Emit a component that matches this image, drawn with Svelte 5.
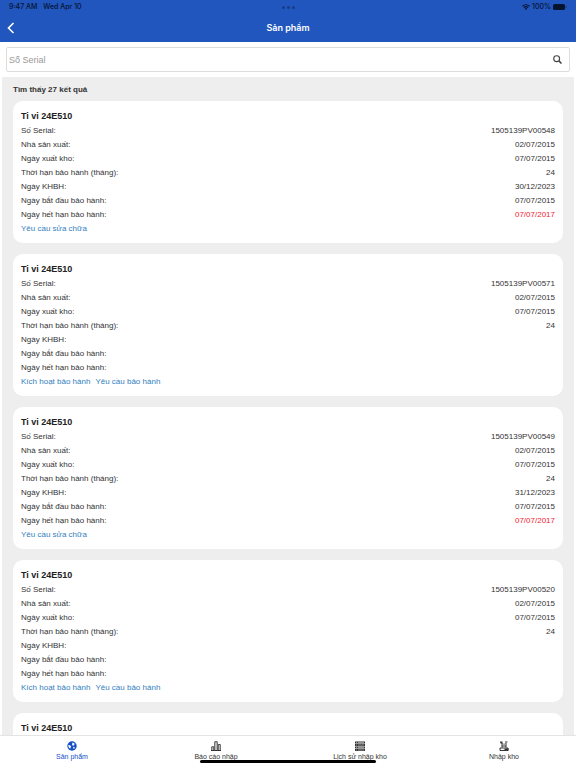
<script lang="ts">
	type Product = {
		name: string;
		serial: string;
		activated: string;
		start: string;
		end: string;
	};

	let query = $state('');
	let activeTab = $state('product');

	const products: Product[] = [
		{ name: 'Ti vi 24E510', serial: '1505139PV00548', activated: '30/12/2023', start: '07/07/2015', end: '07/07/2017' },
		{ name: 'Ti vi 24E510', serial: '1505139PV00571', activated: '', start: '', end: '' },
		{ name: 'Ti vi 24E510', serial: '1505139PV00549', activated: '31/12/2023', start: '07/07/2015', end: '07/07/2017' },
		{ name: 'Ti vi 24E510', serial: '1505139PV00520', activated: '', start: '', end: '' },
		{ name: 'Ti vi 24E510', serial: '', activated: '', start: '', end: '' }
	];

	const tabs = [
		{ id: 'product', label: 'Sản phẩm' },
		{ id: 'report', label: 'Báo cáo nhập' },
		{ id: 'history', label: 'Lịch sử nhập kho' },
		{ id: 'import', label: 'Nhập kho' }
	];
</script>

<div class="screen">
	<header class="header">
		<div class="status">
			<div class="status-left">
				<span>9:47 AM</span>
				<span>Wed Apr 10</span>
			</div>
			<div class="dots"><i></i><i></i><i></i></div>
			<div class="status-right">
				<svg width="8" height="6" viewBox="0 0 16 12" aria-hidden="true">
					<path d="M1 4.5a10 10 0 0 1 14 0M3.7 7.2a6.2 6.2 0 0 1 8.6 0" fill="none" stroke="currentColor" stroke-width="2.2" />
					<path d="M8 12 5.4 9.3a3.8 3.8 0 0 1 5.2 0z" fill="currentColor" />
				</svg>
				<span>100%</span>
				<svg width="14" height="6" viewBox="0 0 28 12" aria-hidden="true">
					<rect x="0" y="0" width="24" height="12" rx="3" fill="currentColor" />
					<path d="M25.5 4a2.4 2.4 0 0 1 0 4z" fill="currentColor" />
				</svg>
			</div>
		</div>
		<div class="nav">
			<button class="back" aria-label="Quay lại">
				<svg width="8" height="12" viewBox="0 0 8 12" aria-hidden="true">
					<path d="M6.5 1 1.5 6l5 5" fill="none" stroke="currentColor" stroke-width="1.6" />
				</svg>
			</button>
			<h1>Sản phẩm</h1>
		</div>
	</header>

	<form class="search" onsubmit={(e) => e.preventDefault()}>
		<input type="text" aria-label="Số Serial" placeholder="Số Serial" bind:value={query} />
		<button type="submit" aria-label="Tìm kiếm">
			<svg width="9" height="9" viewBox="0 0 16 16" aria-hidden="true">
				<circle cx="6.5" cy="6.5" r="5.2" fill="none" stroke="currentColor" stroke-width="2" />
				<path d="m10.5 10.5 4.6 4.6" stroke="currentColor" stroke-width="2.8" />
			</svg>
		</button>
	</form>

	<main class="results">
		<p class="count">Tìm thấy 27 kết quả</p>

		{#each products as p}
			<article class="card">
				<h2>{p.name}</h2>
				<dl>
					<div><dt>Số Serial:</dt><dd>{p.serial}</dd></div>
					<div><dt>Nhà sản xuất:</dt><dd>02/07/2015</dd></div>
					<div><dt>Ngày xuất kho:</dt><dd>07/07/2015</dd></div>
					<div><dt>Thời hạn bảo hành (tháng):</dt><dd>24</dd></div>
					<div><dt>Ngày KHBH:</dt><dd>{p.activated}</dd></div>
					<div><dt>Ngày bắt đầu bảo hành:</dt><dd>{p.start}</dd></div>
					<div><dt>Ngày hết hạn bảo hành:</dt><dd class="expired">{p.end}</dd></div>
				</dl>
				<div class="actions">
					{#if p.activated}
						<a href="#repair">Yêu cầu sửa chữa</a>
					{:else}
						<a href="#activate">Kích hoạt bảo hành</a>
						<a href="#warranty">Yêu cầu bảo hành</a>
					{/if}
				</div>
			</article>
		{/each}
	</main>

	<nav class="tabs">
		{#each tabs as tab}
			<button class:active={activeTab === tab.id} onclick={() => (activeTab = tab.id)}>
				<svg width="10" height="10" viewBox="0 0 20 20" aria-hidden="true">
					{#if tab.id === 'product'}
						<circle cx="10" cy="10" r="9.4" fill="currentColor" />
						<path d="M11 3l4 2-.5 3.5-3 .8-1.500-2.300zM2.500 8l3.500.7 2.500 2.600-1.500 1.800-.4 2.500L3.500 13zM12.500 12l3.500.4-1.600 3.100-2.200-.9z" fill="#fff" />
					{:else if tab.id === 'report'}
						<path d="M1.5 19v-7.500h4V19zM7.500 19V1.500h5V19zM14.500 19V7h4v12z" fill="#ddd" stroke="currentColor" stroke-width="1.800" />
						<path d="M0 19h20" stroke="currentColor" stroke-width="2" />
					{:else if tab.id === 'history'}
						<path d="M0 1h20v4H0zM0 6h20v4H0zM0 11h20v4H0zM0 16h20v4H0z" fill="currentColor" />
						<path d="M6 3h12M6 8h12M6 13h12M6 18h12M2 3h2M2 8h2M2 13h2M2 18h2" stroke="#bbb" stroke-width="1.400" />
					{:else}
						<path d="M2 14h16v5H2z" fill="#fff" stroke="currentColor" stroke-width="2" />
						<path d="M6 13V4M14 13V4M6 10h8M12 2h5M8 5l2 2 2-2" fill="none" stroke="currentColor" stroke-width="2" />
						<path d="M2 1h5v4H3z" fill="currentColor" />
						<path d="M11 17h8" stroke="currentColor" stroke-width="4" />
					{/if}
				</svg>
				<span>{tab.label}</span>
			</button>
		{/each}
		<div class="home-bar"></div>
	</nav>
</div>

<style>
	:global(body) {
		background: #fff;
	}
	.screen {
		display: flex;
		flex-direction: column;
		height: 100vh;
		font-family: 'Liberation Sans', Arial, sans-serif;
		font-size: 8px;
		line-height: 14px;
		color: #333;
	}
	button {
		border: 0;
		padding: 0;
		background: none;
		font: inherit;
		color: inherit;
		cursor: pointer;
	}
	svg {
		display: block;
	}
	.header {
		background: #2156bf;
		font-family: Inter, sans-serif;
	}
	.status {
		display: grid;
		grid-template-columns: 1fr auto 1fr;
		align-items: center;
		height: 14px;
		padding: 0 9px;
		font-size: 7px;
		font-weight: 500;
		color: #071430;
	}
	.status-left {
		display: flex;
		gap: 6px;
	}
	.status-right {
		display: flex;
		align-items: center;
		justify-content: flex-end;
		gap: 2px;
	}
	.dots {
		display: flex;
		gap: 2px;
	}
	.dots i {
		width: 3px;
		height: 3px;
		border-radius: 50%;
		background: #173d87;
	}
	.nav {
		display: grid;
		grid-template-columns: 1fr auto 1fr;
		align-items: center;
		height: 28px;
		padding: 0 7px;
		color: #fff;
	}
	.nav h1 {
		margin: 0;
		font-size: 9px;
		font-weight: 600;
	}
	.search {
		display: flex;
		height: 23px;
		margin: 5px 6px;
		border: 1px solid #ddd;
		border-radius: 2px;
	}
	.search input {
		flex: 1;
		min-width: 0;
		padding: 0 2px;
		border: 0;
		outline: 0;
		background: none;
		font: inherit;
		font-size: 9px;
		color: #333;
	}
	.search input::placeholder {
		color: #999;
	}
	.search button {
		display: flex;
		align-items: center;
		padding: 0 7px;
		color: #444;
	}
	.results {
		flex: 1;
		min-height: 0;
		margin: 0 2px;
		padding: 6px 11px 0;
		background: #eee;
		overflow-y: auto;
		scrollbar-width: none;
	}
	.count {
		margin: 0 0 4px;
		font-weight: 700;
	}
	.card {
		margin-bottom: 11px;
		padding: 8px 8px 7px;
		border-radius: 10px;
		background: #fff;
	}
	.card h2 {
		margin: 0;
		font-size: 9px;
		line-height: 15px;
		font-weight: 700;
		color: #222;
	}
	.card dl {
		margin: 0;
	}
	.card dl div {
		display: flex;
		justify-content: space-between;
	}
	.card dd {
		margin: 0;
	}
	.card .expired {
		color: #f5222d;
	}
	.actions {
		display: flex;
		gap: 5px;
	}
	.actions a {
		color: #3480c0;
		text-decoration: none;
	}
	.tabs {
		position: relative;
		display: grid;
		grid-template-columns: repeat(4, 1fr);
		height: 32px;
		border-top: 1px solid #e4e4e4;
		background: #fff;
	}
	.tabs button {
		display: flex;
		flex-direction: column;
		align-items: center;
		padding-top: 5px;
		font-size: 7px;
		line-height: 12px;
	}
	.tabs .active {
		color: #1450c8;
	}
	.home-bar {
		position: absolute;
		left: 50%;
		bottom: 5px;
		width: 176px;
		height: 3px;
		border-radius: 2px;
		background: #000;
		transform: translateX(-50%);
	}
</style>
